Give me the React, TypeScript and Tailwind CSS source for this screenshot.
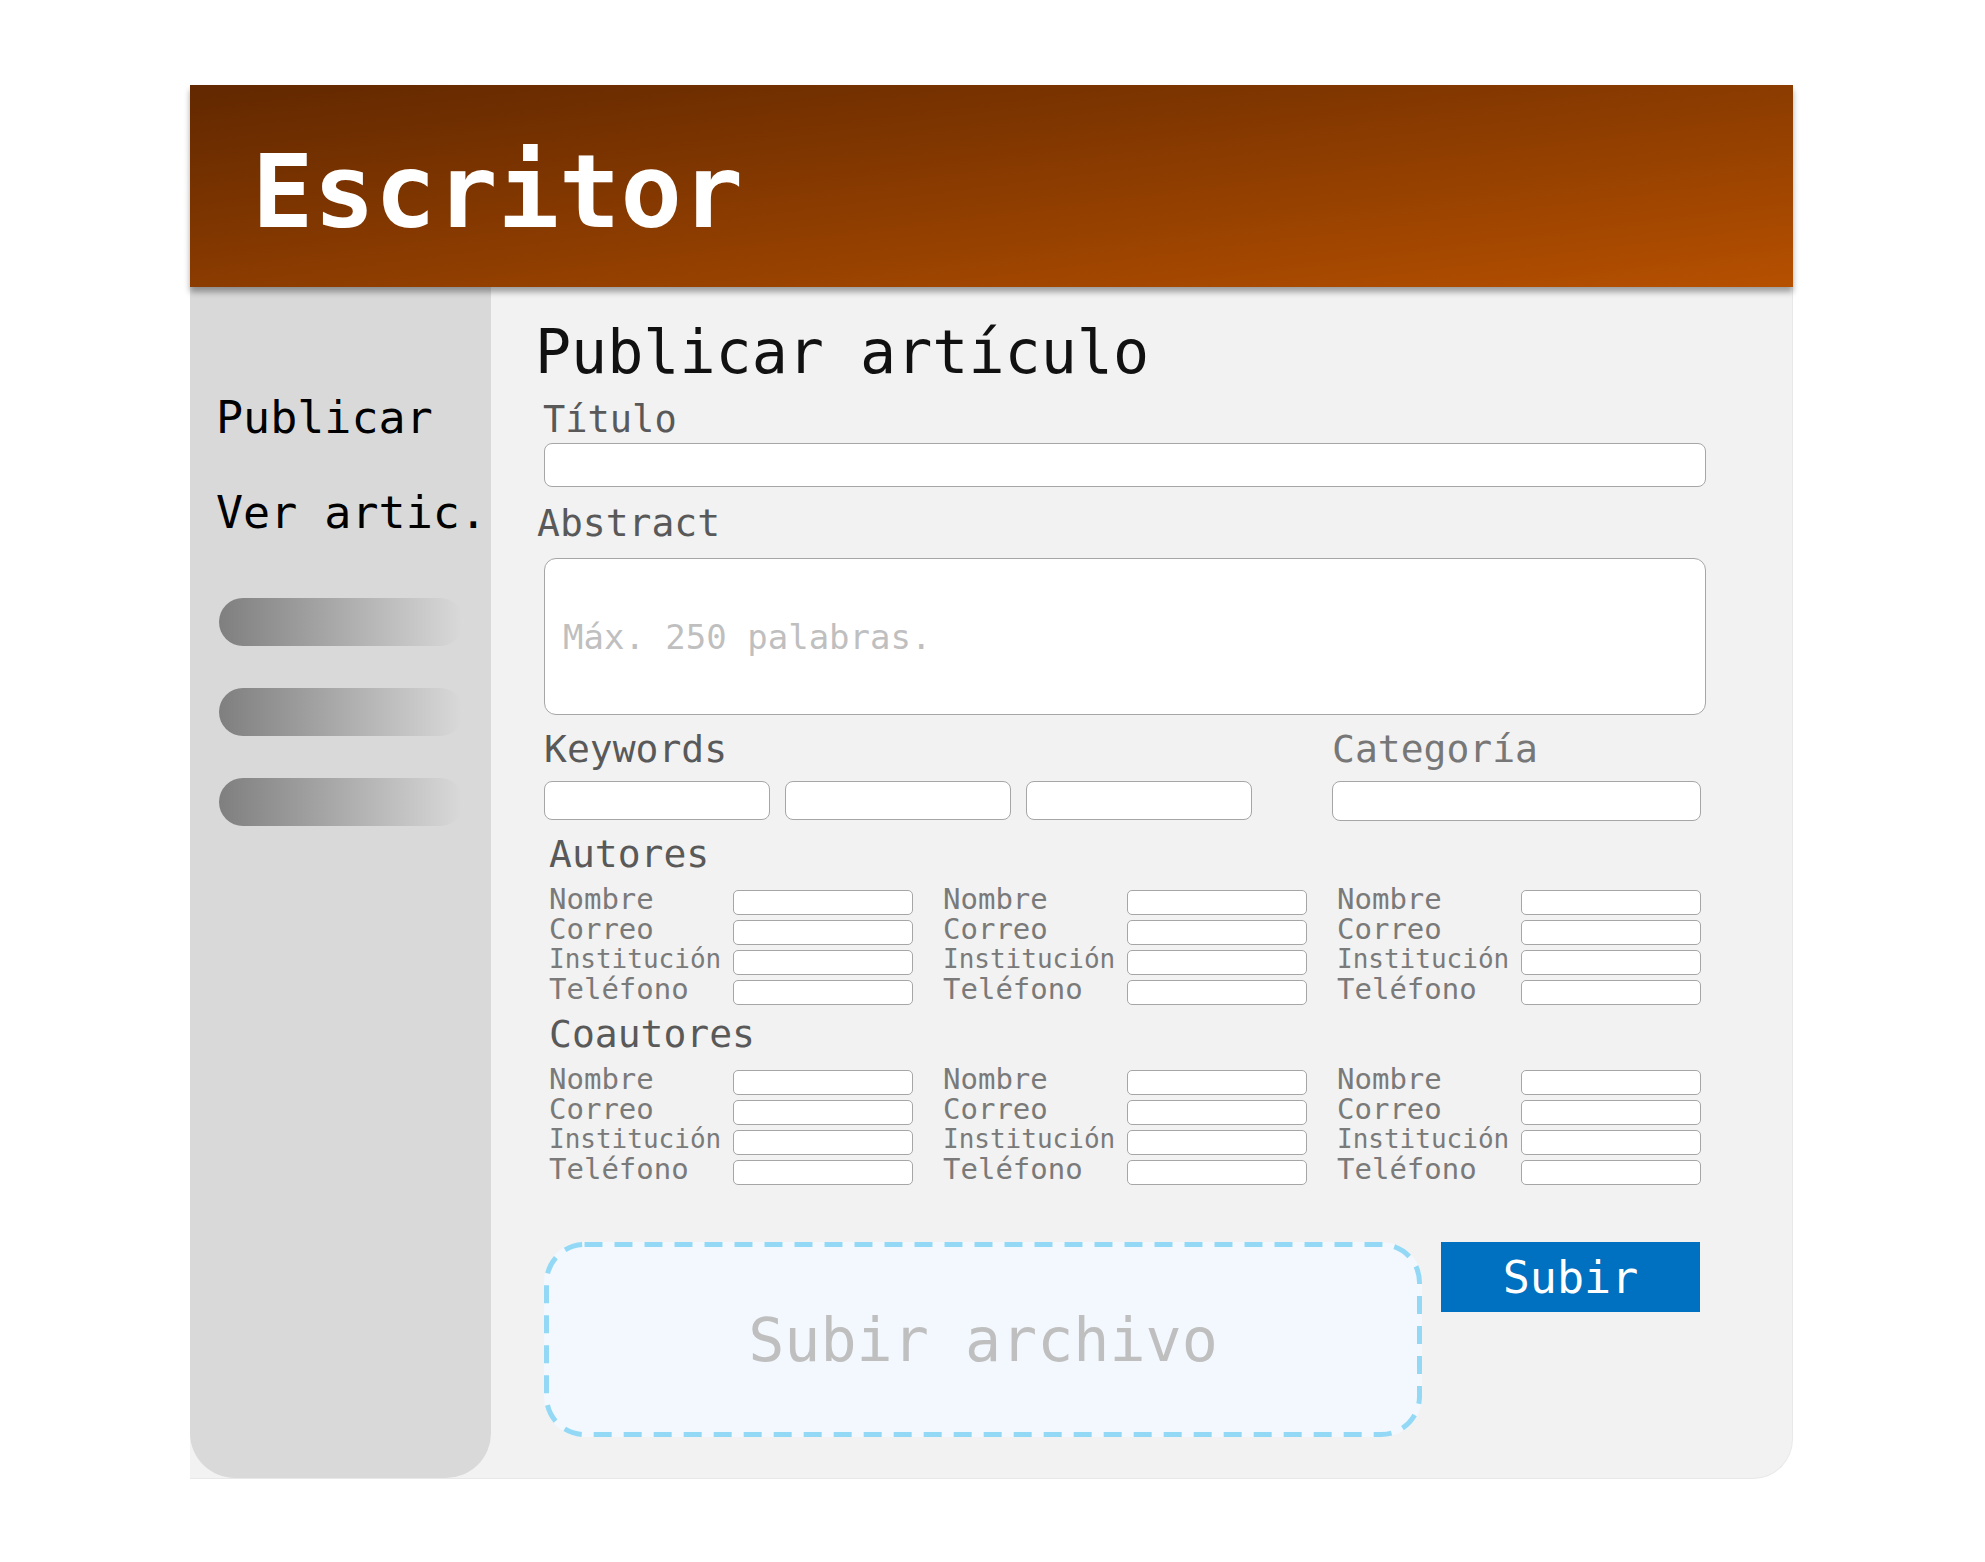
import React from 'react';

const authorFields = ['Nombre', 'Correo', 'Institución', 'Teléfono'];

const SmallInput = () => (
  <div className="h-[25px] w-[180px] shrink-0 rounded-[5px] border-[1.5px] border-[#a6a6a6] bg-white" />
);

const PersonColumn = () => (
  <div className="flex flex-col">
    {authorFields.map((f) => (
      <div key={f} className="flex h-[30px] items-center">
        <span
          className={`block w-[184px] -translate-y-[3px] leading-none text-[#7a7a7a] ${
            f === 'Institución' ? 'text-[26px]' : 'text-[29px]'
          }`}
        >
          {f}
        </span>
        <SmallInput />
      </div>
    ))}
  </div>
);

const PeopleGrid = () => (
  <div className="ml-[5px] grid w-[1152px] grid-cols-3 gap-x-[30px]">
    <PersonColumn />
    <PersonColumn />
    <PersonColumn />
  </div>
);

const Sidebar = () => (
  <aside className="flex w-[301px] shrink-0 flex-col rounded-b-[45px] bg-[#d9d9d9] pl-[26px] pt-[108px]">
    <span className="text-[45px] leading-none text-black">Publicar</span>
    <span className="mt-[50px] text-[45px] leading-none text-black">Ver artic.</span>
    <div className="ml-[3px] mt-[63px] flex flex-col gap-[42px]">
      {[0, 1, 2].map((i) => (
        <div
          key={i}
          className="h-[48px] w-[245px] rounded-full bg-linear-to-r from-[#7f7f7f] to-[#dadada]"
        />
      ))}
    </div>
  </aside>
);

const UploadBox = () => (
  <div className="relative flex h-[195px] w-[878px] items-center justify-center rounded-[40px] bg-[#f2f8fe]">
    {/* dashed outline */}
    <svg className="absolute inset-0" width="878" height="195" viewBox="0 0 878 195">
      <rect
        x="2.5"
        y="2.5"
        width="873"
        height="190"
        rx="38"
        fill="none"
        stroke="#93d9f6"
        strokeWidth="5"
        strokeDasharray="18 12"
      />
    </svg>
    <span className="relative text-[60px] leading-none text-[#bfbfbf]">Subir archivo</span>
  </div>
);

const Main = () => (
  <main className="flex w-[1162px] flex-col pt-[35px]">
    <h2 className="-ml-[9px] text-[60px] leading-none text-[#111]">Publicar artículo</h2>

    {/* Titulo */}
    <label className="-ml-[1px] mt-[19px] text-[37px] leading-none text-[#595959]">Título</label>
    <div className="mt-[5px] h-[44px] w-full rounded-lg border-[1.5px] border-[#a6a6a6] bg-white" />

    {/* Abstract */}
    <label className="-ml-[7px] mt-[17px] text-[38px] leading-none text-[#595959]">Abstract</label>
    <div className="mt-[16px] flex h-[157px] w-full items-center rounded-[12px] border-[1.5px] border-[#a6a6a6] bg-white pl-[18px]">
      <span className="text-[34px] leading-none text-[#bfbfbf]">Máx. 250 palabras.</span>
    </div>

    {/* Keywords + categoria */}
    <div className="mt-[15px] flex">
      <div className="flex w-[709px] flex-col">
        <span className="text-[38px] leading-none text-[#595959]">Keywords</span>
        <div className="mt-[13px] flex gap-[15px]">
          {[0, 1, 2].map((i) => (
            <div
              key={i}
              className="h-[39px] w-[226px] rounded-lg border-[1.5px] border-[#a6a6a6] bg-white"
            />
          ))}
        </div>
      </div>
      <div className="ml-[79px] flex w-[369px] flex-col">
        <span className="text-[38px] leading-none text-[#777]">Categoría</span>
        <div className="mt-[13px] h-[40px] w-full rounded-lg border-[1.5px] border-[#a6a6a6] bg-white" />
      </div>
    </div>

    {/* Autores */}
    <span className="ml-[5px] mt-[14px] text-[38px] leading-none text-[#595959]">Autores</span>
    <div className="mt-[14px]">
      <PeopleGrid />
    </div>

    {/* Coautores */}
    <span className="ml-[5px] mt-[8px] text-[38px] leading-none text-[#595959]">Coautores</span>
    <div className="mt-[14px]">
      <PeopleGrid />
    </div>

    {/* Subida */}
    <div className="mt-[55px] flex items-start">
      <UploadBox />
      <button className="ml-[19px] flex h-[70px] w-[259px] items-center justify-center bg-[#0070c0] text-[45px] leading-none text-white">
        Subir
      </button>
    </div>
  </main>
);

export default function App() {
  return (
    <div className="min-h-screen bg-white pl-[190px] pt-[85px] font-['DejaVu_Sans_Mono','Liberation_Mono',monospace]">
      <div className="flex w-[1603px] flex-col">
        <header className="relative z-10 h-[202px] bg-linear-to-br from-[#622800] to-[#b65000] pl-[62px] pt-[56px] shadow-[0_5px_6px_rgba(0,0,0,0.35)]">
          <h1 className="text-[102px] font-bold leading-none text-white">Escritor</h1>
        </header>
        <div className="flex h-[1192px] rounded-br-[40px] border-r border-b border-[#e8e8e8] bg-[#f2f2f2]">
          <Sidebar />
          <div className="pl-[53px]">
            <Main />
          </div>
        </div>
      </div>
    </div>
  );
}
